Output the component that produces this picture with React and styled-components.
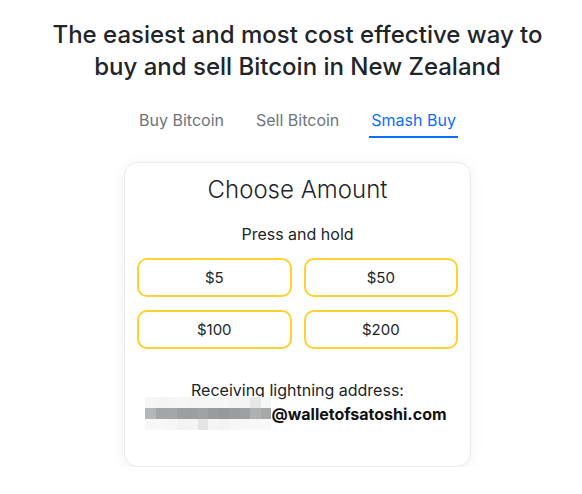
import React from 'react';
import styled, { createGlobalStyle } from 'styled-components';

const Global = createGlobalStyle`
  body {
    margin: 0;
    background: #fff;
    font-family: Inter, "Noto Sans", sans-serif;
    color: #212529;
  }
`;

const Page = styled.div`
  width: 582px;
  box-sizing: border-box;
  padding: 19px 0 0 13px;
  display: flex;
  flex-direction: column;
  align-items: center;
`;

const Title = styled.h1`
  margin: 0;
  width: 505px;
  text-align: center;
  font-size: 24px;
  font-weight: 500;
  line-height: 32px;
  color: #212529;
`;

const Tabs = styled.nav`
  display: flex;
  margin-top: 26px;
`;

const Tab = styled.div`
  padding: 0 14px;
  font-size: 16px;
  line-height: 22px;
  color: ${p => (p.$active ? '#0d6efd' : '#6c757d')};
  & > span {
    display: inline-block;
    padding: 0 2px 5px;
    border-bottom: 2px solid ${p => (p.$active ? '#0d6efd' : 'transparent')};
  }
`;

const Card = styled.section`
  margin-top: 24px;
  width: 347px;
  box-sizing: border-box;
  background: #fff;
  border: 1px solid #ebebeb;
  border-radius: 14px;
  box-shadow: 0 2px 16px rgba(0, 0, 0, 0.06);
  padding: 11px 12px 36px;
  display: flex;
  flex-direction: column;
  align-items: center;
`;

const Heading = styled.h2`
  margin: 0;
  font-size: 24px;
  font-weight: 300;
  line-height: 32px;
  color: #212529;
`;

const Hint = styled.p`
  margin: 17px 0 0;
  font-size: 16px;
  line-height: 22px;
`;

const Grid = styled.div`
  margin-top: 13px;
  width: 100%;
  display: grid;
  grid-template-columns: 1fr 1fr;
  column-gap: 12px;
  row-gap: 13px;
`;

const Amount = styled.button`
  height: 39px;
  box-sizing: border-box;
  border: 2px solid #ffd02f;
  border-radius: 10px;
  background: #fff;
  font-family: Inter, "Noto Sans", sans-serif;
  font-size: 15px;
  color: #212529;
  cursor: pointer;
`;

const Receiving = styled.p`
  margin: 30px 0 0;
  font-size: 16px;
  line-height: 22px;
  text-align: center;
`;

const AddressRow = styled.div`
  display: flex;
  align-items: center;
  margin-top: -4px;
  margin-left: -3px;
`;

const Blur = styled.div`
  display: grid;
  grid-template-columns: repeat(12, 10.5px);
  grid-template-rows: repeat(3, 11px);
`;

const Cell = styled.div`
  background: ${p => p.$c};
`;

const Domain = styled.span`
  font-size: 16px;
  font-weight: 700;
  color: #111;
`;

const blurRows = [
  ['#f6f6f6', '#f4f4f4', '#f5f5f5', '#f6f6f6', '#f5f5f5', '#f6f6f6', '#f6f6f6', '#f6f6f6', '#f5f5f5', '#f4f4f4', '#e6e6e6', '#f6f6f6'],
  ['#b4b6b7', '#a3a5a6', '#a4a6a7', '#9d9fa0', '#9c9e9f', '#a0a2a3', '#999b9c', '#979999', '#9a9c9d', '#9e9fa0', '#aeb0b1', '#a6a8a9'],
  ['#f7f7f7', '#f8f8f8', '#f6f6f6', '#f3f3f3', '#f4f4f4', '#e4e4e4', '#f5f5f5', '#f3f3f3', '#f6f6f6', '#f7f7f7', '#f7f7f7', '#f8f8f8'],
];

const amounts = ['$5', '$50', '$100', '$200'];

export default function App() {
  return (
    <>
      <Global />
      <Page>
        <Title>The easiest and most cost effective way to buy and sell Bitcoin in New Zealand</Title>
        <Tabs>
          <Tab><span>Buy Bitcoin</span></Tab>
          <Tab><span>Sell Bitcoin</span></Tab>
          <Tab $active><span>Smash Buy</span></Tab>
        </Tabs>
        <Card>
          <Heading>Choose Amount</Heading>
          <Hint>Press and hold</Hint>
          <Grid>
            {amounts.map(a => (
              <Amount key={a}>{a}</Amount>
            ))}
          </Grid>
          <Receiving>Receiving lightning address:</Receiving>
          <AddressRow>
            <Blur>
              {blurRows.flat().map((c, i) => (
                <Cell key={i} $c={c} />
              ))}
            </Blur>
            <Domain>@walletofsatoshi.com</Domain>
          </AddressRow>
        </Card>
      </Page>
    </>
  );
}
